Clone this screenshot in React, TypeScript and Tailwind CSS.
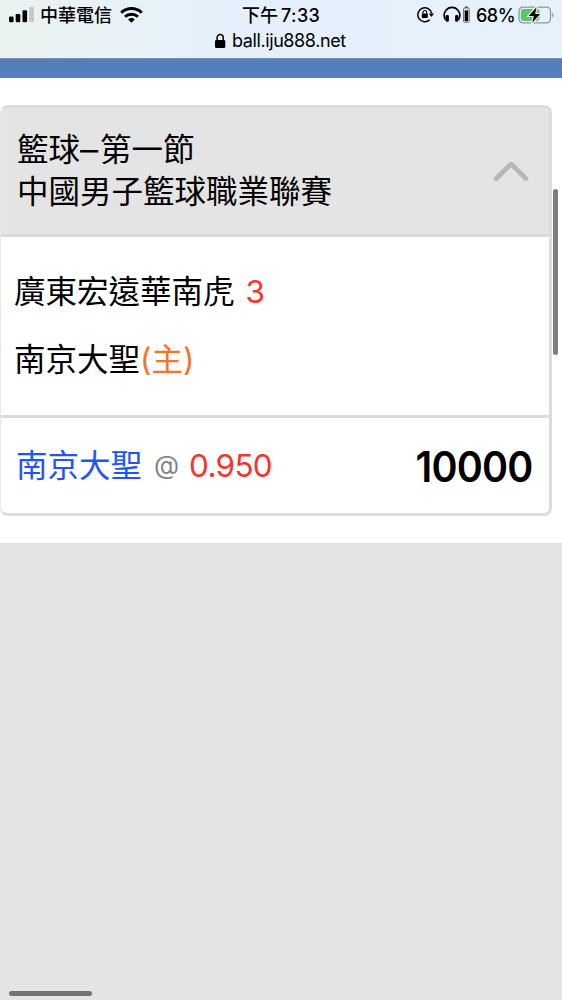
import type { ReactNode } from 'react';

const SANS = "font-['Inter','Noto_Sans_CJK_TC',sans-serif]";

function SignalIcon() {
    return (
        <svg className="mt-[6px] h-[18px] w-[26px] shrink-0" viewBox="0 0 26 18" aria-hidden="true">
            <rect x="0" y="10.5" width="4.6" height="5.7" rx="1.3" />
            <rect x="6.7" y="8" width="4.6" height="8.2" rx="1.3" />
            <rect x="13.5" y="4.2" width="4.6" height="12" rx="1.3" />
            <rect x="20.2" y="1" width="4.8" height="15.2" rx="1.3" fill="#c3c9c9" />
        </svg>
    );
}

function WifiIcon() {
    return (
        <svg className="h-[18px] w-[23px] shrink-0" viewBox="0 0 24 18" fill="none" stroke="#000" strokeWidth="3.1" aria-hidden="true">
            <path d="M1.3 6.6C7.2.9 16.8.9 22.7 6.6" />
            <path d="M5.2 10.8c3.8-3.5 9.8-3.5 13.6 0" />
            <path d="M8.5 13.6c2-1.8 5-1.8 7 0L12 17z" fill="#000" stroke="none" />
        </svg>
    );
}

function RotationLockIcon() {
    return (
        <svg className="h-[17px] w-[18px] shrink-0" viewBox="0 0 18 17" aria-hidden="true">
            <path d="M12.7 13.8A7 7 0 1 1 14.7 7.3" fill="none" stroke="#000" strokeWidth="1.5" />
            <path d="M11.8 7.4h5.2l-2.5 3.6z" />
            <rect x="4.8" y="7.4" width="6" height="4.6" rx=".7" />
            <path d="M6 7.8V6.3a1.8 1.8 0 0 1 3.6 0v1.5" fill="none" stroke="#000" strokeWidth="1.1" />
        </svg>
    );
}

function HeadphonesIcon() {
    return (
        <svg className="h-[17px] w-[18px] shrink-0" viewBox="0 0 18 17" aria-hidden="true">
            <path d="M2.6 13.8C.6 10.8 1 7 2.8 4.5 5.9.3 12.1.3 15.2 4.5c1.8 2.5 2.2 6.3.2 9.3" fill="none" stroke="#000" strokeWidth="1.6" />
            <rect x="2.6" y="9" width="3.3" height="6.8" rx="1.3" />
            <rect x="12.1" y="9" width="3.3" height="6.8" rx="1.3" />
        </svg>
    );
}

function AccessoryBatteryIcon() {
    return (
        <svg className="h-[17px] w-[7px] shrink-0" viewBox="0 0 7 17" aria-hidden="true">
            <rect x=".6" y="2" width="5.6" height="14.2" rx="1" fill="none" stroke="#555b61" strokeWidth=".9" />
            <rect x="2" y=".4" width="2.8" height="1.6" fill="#555b61" />
            <rect x="1.7" y="4.4" width="3.4" height="10.7" />
        </svg>
    );
}

function BatteryIcon() {
    return (
        <svg className="h-[20px] w-[37px] shrink-0" viewBox="0 0 37 20" aria-hidden="true">
            <rect x="1" y="2.1" width="31.5" height="15.8" rx="4.2" fill="none" stroke="#91979d" strokeWidth="1.3" />
            <path d="M34.2 7.5c1.8.7 1.8 4.3 0 5z" fill="#91979d" />
            <rect x="2.8" y="4" width="18.7" height="12" rx="2.4" fill="#5ec765" />
            <path d="M18.5 2.2 10.7 11h5.1l-1.5 6.8L22.2 9h-5.1z" stroke="#e6f1fc" strokeWidth="2.2" paintOrder="stroke" />
        </svg>
    );
}

function LockIcon() {
    return (
        <svg className="h-[16px] w-[11px] shrink-0" viewBox="0 0 11 16" aria-hidden="true">
            <rect x="0" y="7" width="10.3" height="8" rx="1.3" />
            <path d="M2.1 7.5V4.6a3.05 3.05 0 0 1 6.1 0v2.9" fill="none" stroke="#000" strokeWidth="1.5" />
        </svg>
    );
}

function StatusBar() {
    return (
        <header className="h-[58px] bg-linear-to-r from-[#ebf3f0] via-[#e5f0fc] via-40% to-[#e6f1fc] text-black">
            <div className="grid h-[30px] grid-cols-[242px_170px_150px]">
                <div className="flex pl-[9px]">
                    <SignalIcon />
                    <span className="ml-[5px] w-[80px] text-[18px] leading-[31px] font-medium whitespace-nowrap">中華電信</span>
                    <div className="pt-[6px]">
                        <WifiIcon />
                    </div>
                </div>
                <div className="flex text-[18px] leading-[31px] font-medium whitespace-nowrap">
                    <span>下午</span>
                    <span className="ml-[3px] tracking-[0.4px]">7:33</span>
                </div>
                <div className="flex pt-[6px] pl-[5px]">
                    <RotationLockIcon />
                    <span className="ml-[8px] flex">
                        <HeadphonesIcon />
                    </span>
                    <span className="ml-[2px] flex">
                        <AccessoryBatteryIcon />
                    </span>
                    <span className="-mt-[6px] ml-[6px] w-[40px] text-[18px] leading-[31px] font-medium tracking-[-0.5px] whitespace-nowrap">68%</span>
                    <span className="-mt-[1px] ml-[2px] flex">
                        <BatteryIcon />
                    </span>
                </div>
            </div>
            <div className="flex h-[22px] items-center pl-[215px] text-[18px] leading-[20px]">
                <LockIcon />
                <span className="ml-[6px] tracking-[-0.4px] whitespace-nowrap">ball.iju888.net</span>
            </div>
        </header>
    );
}

function TeamRow({ name, children }: { name: string; children: ReactNode }) {
    return (
        <div className="flex h-[68px] items-center whitespace-nowrap">
            <span>{name}</span>
            {children}
        </div>
    );
}

function BetCard() {
    return (
        <section className="h-[411px] w-[552px] overflow-hidden rounded-lg border-[3px] border-l border-[#dcdcdc] border-l-[#e8e8e8] bg-white text-[31.5px] text-black">
            <div className="flex h-[129px] items-center justify-between border-b-[3px] border-[#d9d9d9] bg-[#e4e4e4] pr-[19px] pl-[16px]">
                <h1 className="leading-[42px] whitespace-nowrap">
                    籃球<span className="inline-block w-[20px] origin-left scale-x-115">–</span>第一節
                    <br />
                    中國男子籃球職業聯賽
                </h1>
                <svg className="h-[24px] w-[38px]" viewBox="0 0 38 24" fill="none" stroke="#b7b7b7" strokeWidth="4.8" strokeLinecap="round" strokeLinejoin="round" aria-hidden="true">
                    <path d="M4.2 19.5 19 5l14.8 14.5" />
                </svg>
            </div>
            <div className="h-[181px] border-b-[3px] border-[#dcdcdc] pt-[21px] pl-[13px]">
                <TeamRow name="廣東宏遠華南虎">
                    <span className="ml-[11px] text-[#f6352b]">3</span>
                </TeamRow>
                <TeamRow name="南京大聖">
                    <span className="text-[#f47429]">(主)</span>
                </TeamRow>
            </div>
            <div className="flex h-[95px] items-center justify-between pr-[16px] pl-[15px] whitespace-nowrap">
                <div className="flex items-center">
                    <span className="text-[#2153ff]">南京大聖</span>
                    <span className="-mt-[3px] ml-[12px] w-[35px] text-[26px] text-[#858585]">@</span>
                    <span className="tracking-[-0.7px] text-[#f6352b]">0.950</span>
                </div>
                <span className="origin-right scale-x-94 pt-[2px] text-[42px] font-semibold tracking-[-0.8px]">10000</span>
            </div>
        </section>
    );
}

export default function App() {
    return (
        <div className={`relative h-[1000px] w-[562px] overflow-hidden bg-[#e4e4e4] ${SANS}`}>
            <StatusBar />
            <div className="h-[20px] border-t border-[#7890b2] bg-[#557fba]" />
            <main className="h-[465px] bg-white pt-[27px]">
                <BetCard />
            </main>
            {/* 捲軸 */}
            <div className="absolute top-[189px] right-[4px] h-[166px] w-[5px] rounded-full bg-[#7f7f7f]" />
            <div className="absolute top-[991px] left-[9px] h-[5px] w-[83px] rounded-full bg-[#737373]" />
        </div>
    );
}
